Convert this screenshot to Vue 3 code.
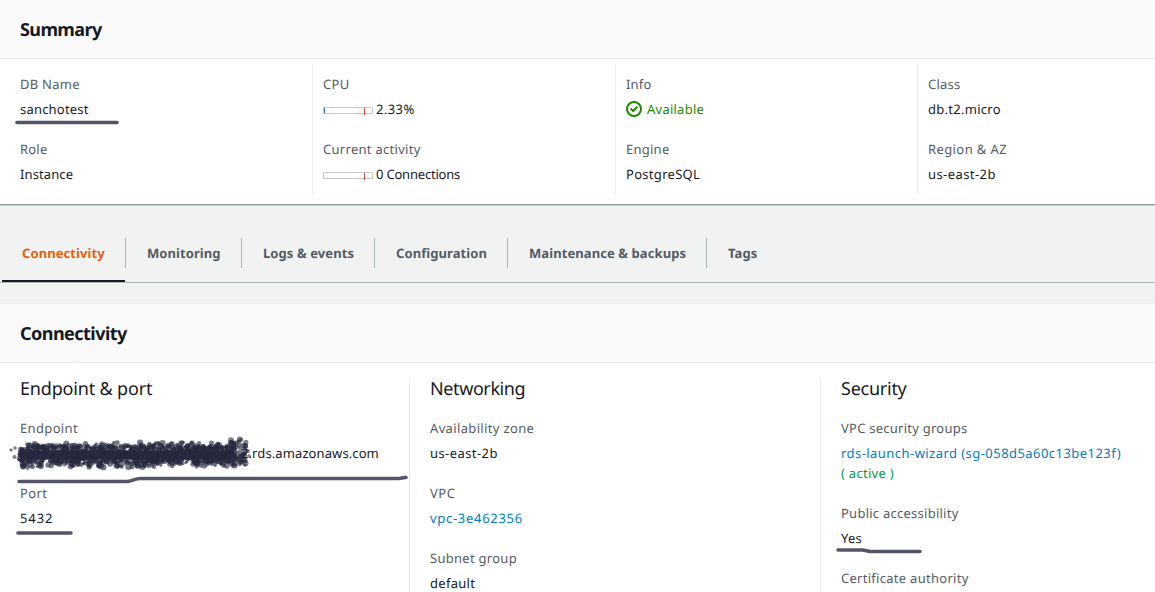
<script setup>
const summary = [
  [
    { label: 'DB Name', ls: 0.25, value: 'sanchotest', vs: 0.2, mark: 'name' },
    { label: 'Role', ls: 0.2, value: 'Instance', vs: 0.1 },
  ],
  [
    { label: 'CPU', ls: 0.3, value: '2.33%', vs: 0.4, meter: true, used: 1 },
    { label: 'Current activity', ls: 0.29, value: '0 Connections', vs: -0.2, meter: true, used: 0 },
  ],
  [
    { label: 'Info', ls: 0.2, value: 'Available', vs: 0.24, ok: true },
    { label: 'Engine', ls: 0.25, value: 'PostgreSQL', vs: 0.3 },
  ],
  [
    { label: 'Class', ls: 0.2, value: 'db.t2.micro', vs: 0.28 },
    { label: 'Region & AZ', ls: 0.4, value: 'us-east-2b', vs: 0.42 },
  ],
]
const tabs = [
  { name: 'Connectivity', cls: 'w123' },
  { name: 'Monitoring', cls: 'w116' },
  { name: 'Logs & events', cls: 'w133' },
  { name: 'Configuration', cls: 'w133' },
  { name: 'Maintenance & backups', cls: 'w199' },
  { name: 'Tags', cls: 'last' },
]

// Repeatable pseudo-random sequence for the redaction brush
let seed = 7
const rnd = () => {
  seed = (seed * 16807) % 2147483647
  return seed / 2147483647
}
const dots = []
for (let i = 0; i < 1300; i++) {
  const x = 19 + rnd() * 217
  const y = 25.5 + (rnd() * 2 - 1) * (x < 26 ? 6 : 9)
  dots.push({ x, y, r: 1 + rnd() * 1.8, o: 0.62 })
}
for (let i = 0; i < 130; i++) {
  const x = 22 + rnd() * 218
  const side = rnd() < 0.5 ? -1 : 1
  dots.push({ x, y: 26 + side * (8.500 + rnd() * 4), r: 1.4 + rnd() * 1.8, o: 0.62 })
}
for (let i = 0; i < 60; i++) {
  dots.push({ x: 230 + rnd() * 16, y: 10 + rnd() * 27, r: 1.4 + rnd() * 1.8, o: 0.6 })
}
dots.push({ x: 11, y: 21, r: 1.6, o: 0.7 }, { x: 15, y: 19, r: 1.8, o: 0.6 }, { x: 14.5, y: 28, r: 2, o: 0.6 }, { x: 248, y: 22, r: 2, o: 0.6 }, { x: 249, y: 27, r: 1.8, o: 0.6 })
</script>

<template>
  <main class="page">
    <section class="summary">
      <header class="head"><h2 class="t-sum">Summary</h2></header>
      <div class="cols">
        <div v-for="(col, i) in summary" :key="i" class="col">
          <div v-for="f in col" :key="f.label" class="field">
            <div class="label" :style="{ letterSpacing: f.ls + 'px' }">{{ f.label }}</div>
            <div class="value" :class="{ ok: f.ok }" :style="{ letterSpacing: f.vs + 'px' }">
              <span v-if="f.meter" class="meter"><i v-if="f.used" class="used"></i><i class="limit"></i></span>
              <svg v-if="f.ok" class="check" width="16" height="16" viewBox="0 0 16 16" fill="none" stroke="#1d8900">
                <circle cx="8" cy="8" r="7" stroke-width="2" />
                <path d="M4.600 7.500 7.200 10 11.400 5.800" stroke-width="2" />
              </svg>
              <span>{{ f.value }}</span>
            </div>
            <svg v-if="f.mark" class="mark m-name" width="110" height="12"><path d="M5 5.500H105" /></svg>
          </div>
        </div>
      </div>
    </section>

    <nav class="tabs">
      <div v-for="(t, i) in tabs" :key="t.name" class="tab" :class="[t.cls, { active: i === 0 }]"><span>{{ t.name }}</span></div>
    </nav>

    <section class="detail">
      <header class="head"><h2 class="t-con">Connectivity</h2></header>
      <div class="three">
        <div class="part">
          <h3 class="h-end">Endpoint &amp; port</h3>
          <div class="field">
            <div class="label s35">Endpoint</div>
            <svg class="scribble" width="256" height="50">
              <path d="M24 26H230" stroke="#272a3f" stroke-width="9" stroke-linecap="round" />
              <circle v-for="(d, i) in dots" :key="i" :cx="d.x" :cy="d.y" :r="d.r" :opacity="d.o" fill="#272a3f" />
            </svg>
            <div class="value host">2.rds.amazonaws.com</div>
            <svg class="mark m-host" width="400" height="16"><path d="M5 9.500H112C118 9.500 120 6.500 127 6.500H385L391 5.500H392" /></svg>
          </div>
          <div class="field">
            <div class="label s35">Port</div>
            <div class="value s80">5432</div>
            <svg class="mark m-port" width="64" height="10"><path d="M5 5H58" /></svg>
          </div>
        </div>
        <div class="part">
          <h3 class="h-net">Networking</h3>
          <div class="field"><div class="label s35">Availability zone</div><div class="value s42">us-east-2b</div></div>
          <div class="field"><div class="label s50">VPC</div><div class="value link s65">vpc-3e462356</div></div>
          <div class="field"><div class="label s28">Subnet group</div><div class="value s28">default</div></div>
        </div>
        <div class="part">
          <h3 class="h-sec">Security</h3>
          <div class="field">
            <div class="label s25">VPC security groups</div>
            <div class="value link s45">rds-launch-wizard (sg-058d5a60c13be123f)</div>
            <div class="value active-note s28">( active )</div>
          </div>
          <div class="field">
            <div class="label s25">Public accessibility</div>
            <div class="value s20">Yes</div>
            <svg class="mark m-yes" width="98" height="12"><path d="M5 5H30L37 6.500H87" /></svg>
          </div>
          <div class="field"><div class="label s28">Certificate authority</div></div>
        </div>
      </div>
    </section>
  </main>
</template>

<style>
body { margin: 0; background: #f2f3f3; overflow: hidden; }
</style>

<style scoped>
.page { width: 1155px; height: 592px; overflow: hidden; background: #f1f3f3; color: #16191f; font: 13px/20px "Noto Sans", "Open Sans", sans-serif; text-rendering: geometricPrecision; }
.page * { box-sizing: border-box; }
.summary { height: 204px; background: #fff; box-shadow: 0 1px 0 #929f9f, 0 2px 1px #c9cecf; }
.head { height: 59px; background: #fafafa; border-bottom: 1px solid #eaeded; padding: 16px 20px 0; }
h2 { margin: 0; font-size: 18px; line-height: 28px; font-weight: 700; white-space: nowrap; }
.t-sum { letter-spacing: -0.6px; }
.t-con { letter-spacing: -0.53px; }
h3 { margin: 0 0 18px; font-size: 18px; line-height: 22px; font-weight: 400; white-space: nowrap; }
.h-end { letter-spacing: -0.17px; }
.h-net { letter-spacing: -0.4px; }
.h-sec { letter-spacing: -0.25px; }
.cols { display: grid; grid-template-columns: 313px 303px 302px 1fr; padding-top: 5px; }
.col { height: 130px; padding: 10px 0 0 10px; border-right: 1px solid #eaeded; }
.col:first-child { padding-left: 20px; }
.col:last-child { border-right: 0; }
.field { position: relative; margin-bottom: 20px; }
.label, .value { height: 20px; white-space: nowrap; letter-spacing: 0.1px; }
.label { color: #545b64; margin-bottom: 5px; }
.value { display: flex; align-items: center; }
.s20 { letter-spacing: 0.2px; }
.s25 { letter-spacing: 0.25px; }
.s28 { letter-spacing: 0.28px; }
.s35 { letter-spacing: 0.35px; }
.s42 { letter-spacing: 0.42px; }
.s45 { letter-spacing: 0.45px; }
.s50 { letter-spacing: 0.5px; }
.s65 { letter-spacing: 0.7px; }
.s80 { letter-spacing: 0.9px; }
.ok { color: #1d8900; }
.link { color: #007dbc; }
.active-note { color: #0a9a3c; }
.check { margin-right: 5px; }
.meter { position: relative; width: 50px; height: 7px; border: 1px solid #c8c8c8; margin: 3px 3px 0 0; }
.used { position: absolute; left: 0; top: 0; width: 1px; height: 5px; background: #2e6da4; }
.limit { position: absolute; left: 40px; top: 0; width: 1px; height: 7px; background: #dd3c3c; }
.mark { position: absolute; fill: none; stroke: #545569; stroke-width: 3.6; stroke-linecap: round; stroke-linejoin: round; filter: blur(0.7px); }
.m-name { left: -8px; top: 43px; }
.m-host { left: -6px; top: 54px; }
.m-port { left: -7px; top: 45px; }
.m-yes { left: -8px; top: 42px; }
.tabs { height: 79px; padding: 34px 0 0 2px; display: flex; border-bottom: 1px solid #aab7b8; }
.tab { position: relative; height: 45px; padding: 5px 0 0 22px; color: #545b64; font-weight: 700; white-space: nowrap; letter-spacing: 0.08px; }
.tab:not(.last)::after { content: ""; position: absolute; right: -1px; top: 0; width: 1px; height: 30px; background: #aab7b8; }
.tab.active { color: #eb5f07; border-bottom: 2px solid #16191f; height: 44px; padding-left: 20px; }
.w123 { width: 123px; }
.w116 { width: 116px; }
.w133 { width: 133px; }
.w199 { width: 199px; }
.detail { margin-top: 20px; height: 289px; background: #fff; }
.detail .head { height: 60px; border-top: 1px solid #eaeded; }
.three { display: grid; grid-template-columns: 410px 411px 1fr; padding-top: 15px; }
.part { height: 300px; padding-left: 20px; border-right: 1px solid #eaeded; }
.part:last-child { border-right: 0; }
.host { position: relative; padding-left: 221px; }
.scribble { position: absolute; left: -20px; top: 11px; }
</style>
